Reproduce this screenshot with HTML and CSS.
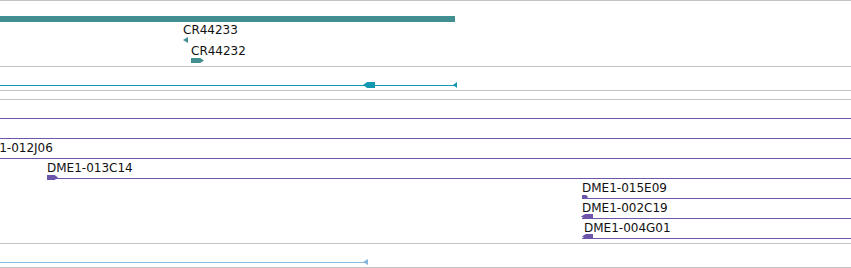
FILE: index.html
```html
<!DOCTYPE html>
<html lang="en">
<head>
  <meta charset="UTF-8">
  <title>Tracks</title>
  <link rel="stylesheet" href="styles.css">
</head>
<body>
  <div class="tracks">
    <!-- gene track -->
    <div class="track track-genes">
      <div class="bar teal-bar" style="left: 0; width: 455px;"></div>
      <div class="label" style="left: 183px; top: 23px;">CR44233</div>
      <div class="arrow arrow-left teal" style="left: 183px; top: 36px; width: 5px; height: 6px;"></div>
      <div class="label" style="left: 191px; top: 44px;">CR44232</div>
      <div class="arrow arrow-right teal" style="left: 191px; top: 57px; width: 13px; height: 5px;"></div>
    </div>

    <!-- transcript track -->
    <div class="track track-short">
      <div class="line blue-line" style="left: 0; width: 457px;"></div>
      <div class="arrow arrow-left-block blue" style="left: 363px; top: 15px; width: 12px; height: 6px;"></div>
      <div class="arrow arrow-end blue" style="left: 453px; top: 15px; width: 4px; height: 6px;"></div>
    </div>

    <div class="track track-empty"></div>

    <!-- clone track -->
    <div class="track track-clones">
      <div class="line purple-line" style="left: 0; top: 18px;"></div>
      <div class="line purple-line" style="left: 0; top: 38px;"></div>
      <div class="label" style="left: -28px; top: 42px;">DME1-012J06</div>
      <div class="line purple-line" style="left: 0; top: 58px;"></div>
      <div class="label" style="left: 47px; top: 62px;">DME1-013C14</div>
      <div class="line purple-line" style="left: 47px; top: 78px;"></div>
      <div class="arrow arrow-right purple" style="left: 47px; top: 75px; width: 11px; height: 5px;"></div>
      <div class="label" style="left: 582px; top: 82px;">DME1-015E09</div>
      <div class="line purple-line" style="left: 582px; top: 98px;"></div>
      <div class="arrow arrow-right purple" style="left: 582px; top: 95px; width: 6px; height: 4px;"></div>
      <div class="label" style="left: 582px; top: 102px;">DME1-002C19</div>
      <div class="line purple-line" style="left: 582px; top: 118px;"></div>
      <div class="arrow arrow-left-block purple" style="left: 581px; top: 114px; width: 12px; height: 5px;"></div>
      <div class="label" style="left: 584px; top: 122px;">DME1-004G01</div>
      <div class="line purple-line" style="left: 582px; top: 138px;"></div>
      <div class="arrow arrow-left-block purple" style="left: 582px; top: 134px; width: 11px; height: 5px;"></div>
    </div>

    <!-- repeat track -->
    <div class="track track-short track-last">
      <div class="line light-line" style="left: 0; width: 368px;"></div>
      <div class="arrow arrow-end light" style="left: 363px; top: 15px; width: 5px; height: 6px;"></div>
    </div>
  </div>
</body>
</html>
```

FILE: styles.css
```css
body {
  margin: 0;
  padding: 0;
  background: #fff;
  font-family: "DejaVu Sans", Verdana, sans-serif;
  overflow: hidden;
}
.tracks {
  width: 851px;
}
.track {
  position: relative;
  border-top: 1px solid #c4c4c4;
  overflow: hidden;
}
.track-genes {
  height: 65px;
}
.track-short {
  height: 23px;
}
.track-empty {
  height: 8px;
}
.track-clones {
  height: 143px;
}
.track-last {
  border-bottom: 1px solid #c4c4c4;
}
.bar {
  position: absolute;
  top: 15px;
  height: 6px;
}
.teal-bar {
  background: #418f90;
}
.line {
  position: absolute;
  top: 18px;
  height: 1px;
}
.blue-line {
  background: #1397b2;
}
.light-line {
  background: #86b8de;
}
.purple-line {
  background: #6d55aa;
  width: 851px;
}
.label {
  position: absolute;
  font-size: 12px;
  line-height: 12px;
  color: #111;
  white-space: nowrap;
}
.arrow {
  position: absolute;
}
.teal { background: #418f90; }
.blue { background: #1397b2; }
.purple { background: #6d55aa; }
.light { background: #86b8de; }
.arrow-left {
  clip-path: polygon(0 50%, 100% 0, 100% 100%);
}
.arrow-right {
  clip-path: polygon(0 0, 70% 0, 100% 50%, 70% 100%, 0 100%);
}
.arrow-left-block {
  clip-path: polygon(0 50%, 35% 0, 100% 0, 100% 100%, 35% 100%);
}
.arrow-end {
  clip-path: polygon(0 50%, 100% 0, 100% 100%);
}
```
